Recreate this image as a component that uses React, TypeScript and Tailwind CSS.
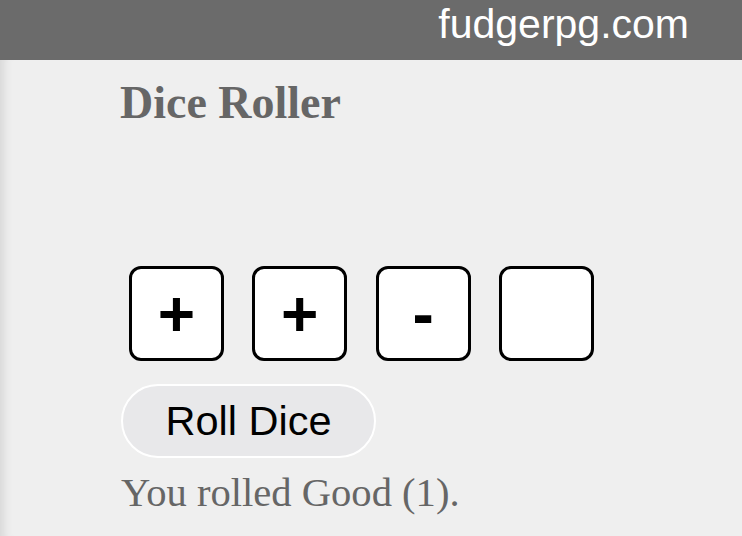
export default function App() {
  const dice = ['+', '+', '-', ''];

  return (
    <div className="min-h-[536px] w-[742px] bg-[#efefef] flex flex-col overflow-hidden">
      {/* Site bar */}
      <div className="h-[60px] shrink-0 bg-[#6b6b6b] pt-[4px] pr-[53px] text-right">
        <span className="font-['Liberation_Sans',Arial,sans-serif] text-[41px] leading-none text-white">
          fudgerpg.com
        </span>
      </div>

      {/* Page body */}
      <div className="flex-1 pl-[120px] shadow-[inset_12px_0_10px_-8px_rgba(0,0,0,0.1)]">
        <h1 className="mt-[20px] font-['Liberation_Serif',serif] text-[46px] font-bold leading-none text-[#666666]">
          Dice Roller
        </h1>

        <div className="mt-[140px] ml-[9px] flex gap-[28.3px]">
          {dice.map((face, i) => (
            <div
              key={i}
              className="flex h-[95px] w-[95px] items-center justify-center rounded-[12px] border-[3px] border-black bg-white font-['Liberation_Sans',Arial,sans-serif] text-[64px] font-bold leading-none text-black"
            >
              {face}
            </div>
          ))}
        </div>

        <button className="mt-[23px] ml-[1px] flex h-[74px] w-[255px] items-center justify-center rounded-full border-2 border-white bg-[#e8e8ea] font-['Liberation_Sans',Arial,sans-serif] text-[41.5px] leading-none text-black">
          Roll Dice
        </button>

        <p className="mt-[15px] ml-[1px] font-['Liberation_Serif',serif] text-[40.6px] leading-none text-[#666666]">
          You rolled Good (1).
        </p>
      </div>
    </div>
  );
}
